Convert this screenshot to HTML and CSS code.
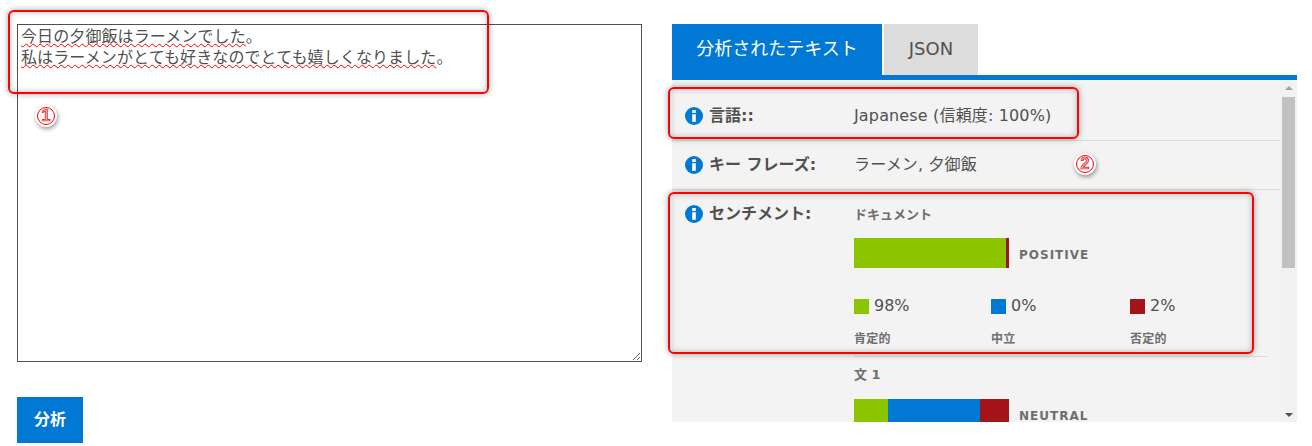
FILE: index.html
```html
<!DOCTYPE html>
<html lang="ja">
<head>
    <meta charset="UTF-8">
    <title>テキスト分析</title>
    <link rel="stylesheet" href="styles.css">
</head>
<body>

    <div class="page">
        <div class="input-col">
            <div class="text-input">
                <span class="misspelled">今日の夕御飯はラーメンでした</span>。<br>
                <span class="misspelled">私はラーメンがとても好きなのでとても嬉しくなりました</span>。
            </div>
            <button class="analyze-btn">分析</button>
        </div>

        <div class="result-col">
            <div class="tabs">
                <div class="tab tab-active">分析されたテキスト</div>
                <div class="tab tab-json">JSON</div>
            </div>
            <div class="panel">
                <div class="panel-body">
                    <div class="row row-first">
                        <div class="row-label">
                            <svg class="info" viewBox="0 0 18 18"><circle cx="9" cy="9" r="9" fill="#0078d4"/><rect x="7.2" y="3" width="3.6" height="3" fill="#fff"/><rect x="7.2" y="7.2" width="3.6" height="7.6" fill="#fff"/></svg>
                            <span>言語::</span>
                        </div>
                        <div class="row-value">Japanese (信頼度: 100%)</div>
                    </div>
                    <div class="row">
                        <div class="row-label">
                            <svg class="info" viewBox="0 0 18 18"><circle cx="9" cy="9" r="9" fill="#0078d4"/><rect x="7.2" y="3" width="3.6" height="3" fill="#fff"/><rect x="7.2" y="7.2" width="3.6" height="7.6" fill="#fff"/></svg>
                            <span>キー フレーズ:</span>
                        </div>
                        <div class="row-value">ラーメン, 夕御飯</div>
                    </div>
                    <div class="row row-sentiment">
                        <div class="row-label">
                            <svg class="info" viewBox="0 0 18 18"><circle cx="9" cy="9" r="9" fill="#0078d4"/><rect x="7.2" y="3" width="3.6" height="3" fill="#fff"/><rect x="7.2" y="7.2" width="3.6" height="7.6" fill="#fff"/></svg>
                            <span>センチメント:</span>
                        </div>
                        <div class="sentiment">
                            <div class="sentiment-block">
                                <div class="block-title">ドキュメント</div>
                                <div class="score">
                                    <div class="bar">
                                        <div class="seg seg-pos" style="width: 152px"></div>
                                        <div class="seg seg-neg" style="width: 3px"></div>
                                    </div>
                                    <div class="score-name">POSITIVE</div>
                                </div>
                                <div class="legend">
                                    <div class="legend-item">
                                        <div class="legend-num"><i class="swatch seg-pos"></i>98%</div>
                                        <div class="legend-name">肯定的</div>
                                    </div>
                                    <div class="legend-item">
                                        <div class="legend-num"><i class="swatch seg-neu"></i>0%</div>
                                        <div class="legend-name">中立</div>
                                    </div>
                                    <div class="legend-item">
                                        <div class="legend-num"><i class="swatch seg-neg"></i>2%</div>
                                        <div class="legend-name">否定的</div>
                                    </div>
                                </div>
                            </div>
                            <div class="sentiment-block block-next">
                                <div class="block-title">文 1</div>
                                <div class="score">
                                    <div class="bar">
                                        <div class="seg seg-pos" style="width: 34px"></div>
                                        <div class="seg seg-neu" style="width: 92px"></div>
                                        <div class="seg seg-neg" style="width: 29px"></div>
                                    </div>
                                    <div class="score-name">NEUTRAL</div>
                                </div>
                            </div>
                        </div>
                    </div>
                </div>
                <div class="scrollbar">
                    <i class="arrow arrow-up"></i>
                    <div class="thumb"></div>
                    <i class="arrow arrow-down"></i>
                </div>
            </div>
        </div>
    </div>

    <!-- annotations drawn over the screenshot -->
    <div class="mark mark-1"></div>
    <div class="mark mark-2"></div>
    <div class="mark mark-3"></div>
    <div class="num num-1">1</div>
    <div class="num num-2">2</div>

</body>
</html>
```

FILE: styles.css
```css
* {
    box-sizing: border-box;
}

body {
    margin: 0;
    height: 446px;
    overflow: hidden;
    background: #fff;
    color: #505050;
    font-family: "DejaVu Sans", "Noto Sans CJK JP", sans-serif;
    position: relative;
}

.page {
    display: flex;
    align-items: flex-start;
    gap: 30px;
    padding: 24px 15px 0 17px;
}

.input-col {
    width: 625px;
    flex: none;
}

.text-input {
    height: 338px;
    border: 1px solid #505050;
    padding: 1px 3px;
    font-size: 16px;
    line-height: 21px;
    letter-spacing: 0.1px;
    color: #505050;
    overflow: auto;
    resize: both;
}

.misspelled {
    text-decoration: underline wavy #f00 1px;
}

.analyze-btn {
    display: block;
    margin-top: 35px;
    width: 66px;
    height: 46px;
    border: none;
    padding: 0 0 5px;
    background: #0078d4;
    color: #fff;
    font-family: inherit;
    font-size: 16px;
    font-weight: bold;
}

.result-col {
    flex: 1;
}

.tabs {
    display: flex;
    gap: 2px;
    height: 51px;
}

.tab {
    background: #dcdcdc;
    font-size: 18px;
    line-height: 50px;
    text-align: center;
}

.tab-active {
    width: 210px;
    background: #0078d4;
    color: #fff;
}

.tab-json {
    width: 94px;
}

.panel {
    display: flex;
    height: 347px;
    border-top: 5px solid #0078d4;
    background: #f3f3f3;
}

.panel-body {
    flex: 1;
    overflow: hidden;
}

.row {
    display: flex;
    height: 49px;
    padding: 14px 13px 0;
    border-bottom: 1px solid #dcdcdc;
}

.row-first {
    height: 61px;
    padding-top: 26px;
}

.row-sentiment {
    height: auto;
    padding-top: 14px;
    border-bottom: none;
}

.row-label {
    display: flex;
    align-items: flex-start;
    gap: 6px;
    width: 169px;
    flex: none;
    font-size: 16px;
    font-weight: bold;
    line-height: 20px;
}

.info {
    width: 18px;
    height: 18px;
    flex: none;
    margin-top: 1px;
}

.row-value {
    font-size: 16px;
    line-height: 20px;
    letter-spacing: 0.15px;
}

.sentiment {
    flex: 1;
    margin-right: -1px;
}

.sentiment-block {
    padding-bottom: 9px;
    border-bottom: 1px solid #dcdcdc;
}

.block-next {
    padding-top: 7px;
    border-bottom: none;
}

.block-title {
    margin-top: 2px;
    font-size: 13px;
    font-weight: bold;
    line-height: 18px;
    color: #6e6e6e;
}

.score {
    display: flex;
    align-items: center;
    gap: 10px;
    margin-top: 14px;
}

.block-next .score {
    margin-top: 15px;
}

.bar {
    display: flex;
    width: 155px;
    height: 30px;
}

.seg {
    height: 100%;
}

.seg-pos {
    background: #8cc400;
}

.seg-neu {
    background: #0078d4;
}

.seg-neg {
    background: #a4131a;
}

.score-name {
    padding-top: 3px;
    font-size: 12px;
    font-weight: bold;
    letter-spacing: 1px;
    color: #6e6e6e;
}

.legend {
    display: grid;
    grid-template-columns: 137px 139px 1fr;
    margin-top: 28px;
}

.legend-num {
    display: flex;
    align-items: center;
    gap: 5px;
    font-size: 16px;
    line-height: 20px;
}

.swatch {
    width: 15px;
    height: 15px;
}

.legend-name {
    margin-top: 15px;
    font-size: 12px;
    font-weight: bold;
    line-height: 16px;
    letter-spacing: 0.3px;
    color: #6e6e6e;
}

.scrollbar {
    display: flex;
    flex-direction: column;
    align-items: center;
    width: 17px;
    flex: none;
    background: #f1f1f1;
    padding: 6px 0 5px;
}

.thumb {
    width: 13px;
    height: 171px;
    margin-top: 7px;
    background: #c1c1c1;
}

.arrow {
    width: 0;
    height: 0;
    border-left: 4px solid transparent;
    border-right: 4px solid transparent;
}

.arrow-up {
    border-bottom: 4px solid #a3a3a3;
}

.arrow-down {
    margin-top: auto;
    border-top: 4px solid #505050;
}

.mark {
    position: absolute;
    border: 2px solid #f00;
    border-radius: 6px;
    box-shadow: 0 0 6px rgba(0, 0, 0, 0.35), inset 0 0 6px rgba(0, 0, 0, 0.25);
}

.mark-1 {
    left: 8px;
    top: 10px;
    width: 481px;
    height: 84px;
}

.mark-2 {
    left: 668px;
    top: 87px;
    width: 411px;
    height: 52px;
}

.mark-3 {
    left: 668px;
    top: 192px;
    width: 586px;
    height: 162px;
}

.num {
    position: absolute;
    width: 22px;
    height: 22px;
    border-radius: 50%;
    background: #fff;
    outline: 1px solid #f00;
    outline-offset: -3px;
    box-shadow: 1px 2px 4px rgba(0, 0, 0, 0.4);
    color: #c0c0c0;
    font-family: "Liberation Sans", sans-serif;
    font-size: 16px;
    font-weight: bold;
    line-height: 22px;
    text-align: center;
    -webkit-text-stroke: 0.7px #f00;
}

.num-1 {
    left: 35px;
    top: 105px;
}

.num-2 {
    left: 1074px;
    top: 153px;
}
```
